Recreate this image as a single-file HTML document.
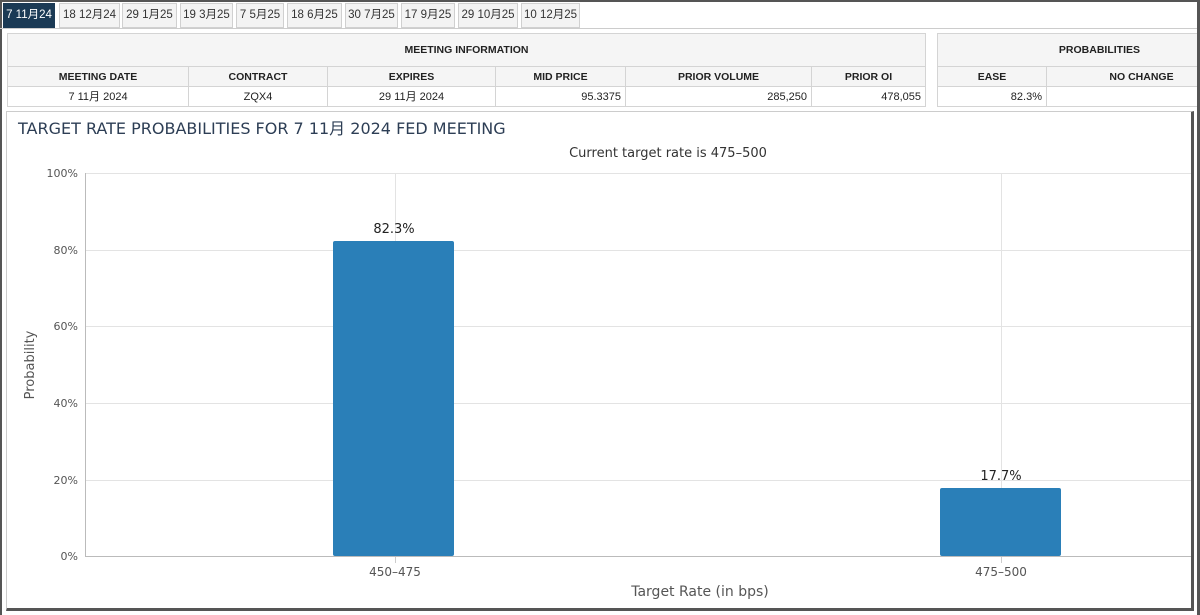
<!DOCTYPE html>
<html><head><meta charset="utf-8"><style>
*{margin:0;padding:0;box-sizing:border-box}
body{width:1200px;height:615px;overflow:hidden;background:#fff;font-family:"Liberation Sans","Noto Sans CJK SC",sans-serif;position:relative}
.frame{position:absolute;left:0;top:0;width:1200px;height:615px;border-top:2px solid #555;border-left:2px solid #555;border-right:3px solid #555}
.tab{position:absolute;top:3px;height:25px;background:#f3f3f3;border:1px solid #d0d0d0;font-size:11.5px;line-height:23px;color:#333;text-align:center}
.tab.a{background:#1b3a55;color:#fff;border-color:#1b3a55}
table{position:absolute;border-collapse:collapse;font-size:11px;color:#222}
td{border:1px solid #d4d4d4;height:20px;padding:0 4px;line-height:18px}
.h td{background:#f5f5f5;font-weight:bold;text-align:center;font-size:10.5px}
.t td{background:#f5f5f5;font-weight:bold;text-align:center;height:33px;font-size:10.5px}
.chart{position:absolute;left:6px;top:111px;width:1188px;height:500px;border:1px solid #ccc;border-right:3px solid #555;border-bottom:3px solid #555}
</style></head><body>
<div class="frame"></div>
<div class="tab a" style="left:3px;width:52px">7 11月24</div>
<div class="tab" style="left:59px;width:61px">18 12月24</div>
<div class="tab" style="left:122px;width:55px">29 1月25</div>
<div class="tab" style="left:180px;width:53px">19 3月25</div>
<div class="tab" style="left:236px;width:48px">7 5月25</div>
<div class="tab" style="left:287px;width:55px">18 6月25</div>
<div class="tab" style="left:345px;width:53px">30 7月25</div>
<div class="tab" style="left:401px;width:54px">17 9月25</div>
<div class="tab" style="left:458px;width:60px">29 10月25</div>
<div class="tab" style="left:521px;width:59px">10 12月25</div>
<div style="position:absolute;left:0;top:28px;width:1197px;height:1px;background:#ccc"></div>
<table style="left:7px;top:33px;width:919px">
<tr class="t"><td colspan="6">MEETING INFORMATION</td></tr>
<tr class="h"><td style="width:181px">MEETING DATE</td><td style="width:139px">CONTRACT</td><td style="width:168px">EXPIRES</td><td style="width:130px">MID PRICE</td><td style="width:186px">PRIOR VOLUME</td><td>PRIOR OI</td></tr>
<tr><td style="text-align:center">7 11月 2024</td><td style="text-align:center">ZQX4</td><td style="text-align:center">29 11月 2024</td><td style="text-align:right">95.3375</td><td style="text-align:right">285,250</td><td style="text-align:right">478,055</td></tr>
</table>
<table style="left:937px;top:33px;width:300px">
<tr class="t"><td colspan="2" style="text-align:right;padding-right:96px">PROBABILITIES</td></tr>
<tr class="h"><td style="width:109px">EASE</td><td>NO CHANGE</td></tr>
<tr><td style="text-align:right">82.3%</td><td></td></tr>
</table>
<div style="position:absolute;left:1197px;top:0;width:3px;height:615px;background:#555"></div>
<div class="chart"></div>
<svg style="position:absolute;left:0;top:0" width="1200" height="615" font-family="DejaVu Sans, sans-serif">
<text x="18" y="134" font-size="16" fill="#2d3e55" font-family="DejaVu Sans,Noto Sans CJK SC,sans-serif">TARGET RATE PROBABILITIES FOR 7 11月 2024 FED MEETING</text>
<text x="668" y="157" font-size="13" fill="#333" text-anchor="middle">Current target rate is 475–500</text>
<g stroke="#e3e3e3" stroke-width="1">
<line x1="85" y1="173.5" x2="1191" y2="173.5"/><line x1="85" y1="250.5" x2="1191" y2="250.5"/><line x1="85" y1="326.5" x2="1191" y2="326.5"/><line x1="85" y1="403.5" x2="1191" y2="403.5"/><line x1="85" y1="480.5" x2="1191" y2="480.5"/>
<line x1="395.5" y1="173" x2="395.5" y2="556"/><line x1="1001.5" y1="173" x2="1001.5" y2="556"/>
</g>
<line x1="85.5" y1="173" x2="85.5" y2="557" stroke="#bbb"/>
<line x1="85" y1="556.5" x2="1191" y2="556.5" stroke="#bbb"/>
<line x1="395.5" y1="557" x2="395.5" y2="563" stroke="#ccc"/><line x1="1001.5" y1="557" x2="1001.5" y2="563" stroke="#ccc"/>
<g font-size="11" fill="#555" text-anchor="end">
<text x="78" y="177">100%</text><text x="78" y="254">80%</text><text x="78" y="330">60%</text><text x="78" y="407">40%</text><text x="78" y="484">20%</text><text x="78" y="560">0%</text>
</g>
<rect x="333" y="241" width="121" height="315" rx="2" fill="#2a7fb8"/>
<rect x="940" y="488" width="121" height="68" rx="2" fill="#2a7fb8"/>
<text x="394" y="233" font-size="13" fill="#222" text-anchor="middle">82.3%</text>
<text x="1001" y="480" font-size="13" fill="#222" text-anchor="middle">17.7%</text>
<text x="395" y="576" font-size="12" fill="#555" text-anchor="middle">450–475</text>
<text x="1001" y="576" font-size="12" fill="#555" text-anchor="middle">475–500</text>
<text x="700" y="596" font-size="14" fill="#555" text-anchor="middle">Target Rate (in bps)</text>
<text transform="translate(34,365) rotate(-90)" font-size="13" fill="#555" text-anchor="middle">Probability</text>
</svg>
</body></html>
